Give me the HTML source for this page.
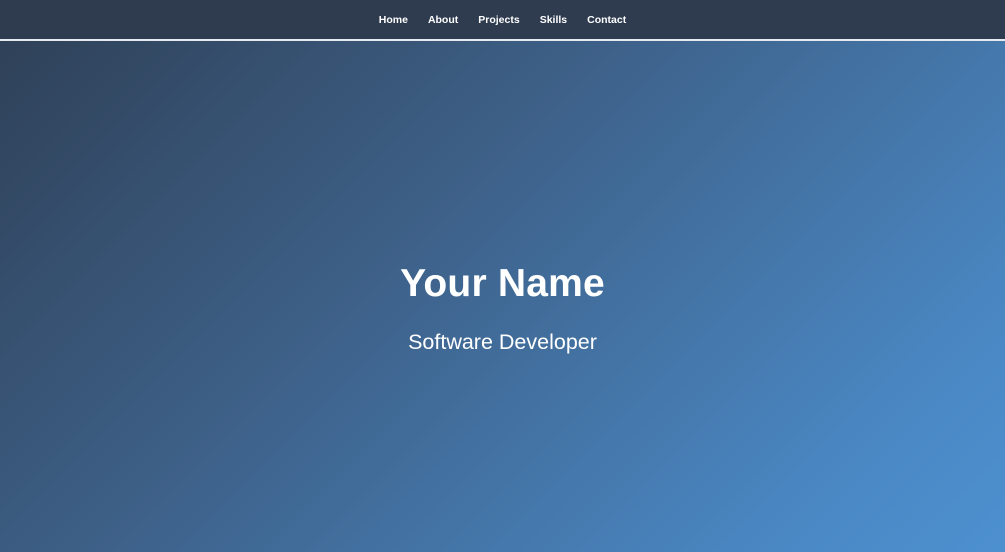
<!DOCTYPE html>
<html><head><meta charset="utf-8"><style>
html,body{margin:0;padding:0;width:1005px;height:552px;overflow:hidden;font-family:"Liberation Sans",sans-serif;}
body{background:linear-gradient(135deg,#2e3f55 0%,#3d5f86 40%,#4a88c4 85%,#4d90d0 100%);position:relative;}
nav{position:absolute;top:0;left:0;width:1005px;height:39px;background:#2f3c50;border-bottom:2px solid #e6e9ee;text-align:center;}
nav a{display:inline-block;color:#fff;font-weight:bold;font-size:10.5px;line-height:40px;margin:0 10px;text-decoration:none;}
h1{position:absolute;top:262px;left:0;width:1005px;text-align:center;margin:0;color:#fff;font-size:39px;font-weight:bold;letter-spacing:0.2px;line-height:44px;}
p{position:absolute;top:328px;left:0;width:1005px;text-align:center;margin:0;color:#fff;font-size:21.5px;line-height:28px;font-weight:normal;}
</style></head><body>
<nav><a>Home</a><a>About</a><a>Projects</a><a>Skills</a><a>Contact</a></nav>
<h1>Your Name</h1>
<p>Software Developer</p>
</body></html>
